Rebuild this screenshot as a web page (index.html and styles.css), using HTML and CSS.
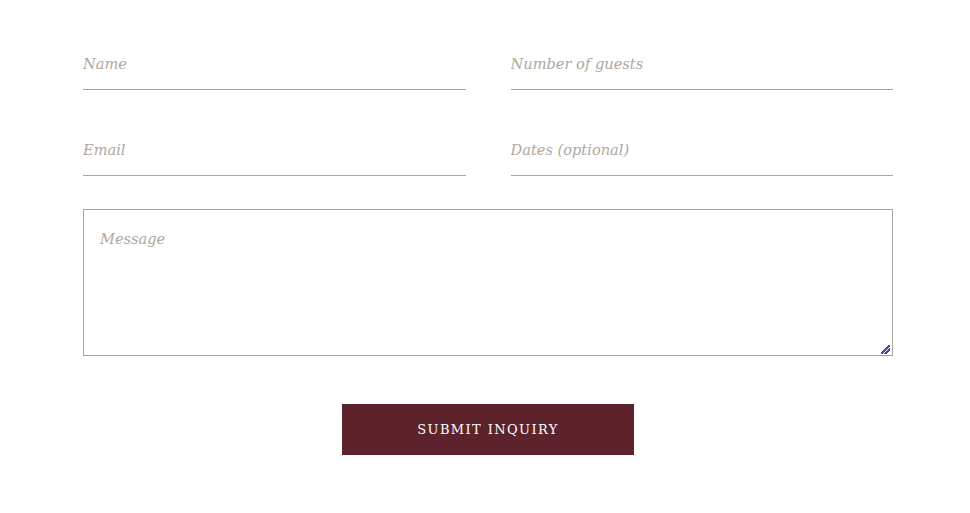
FILE: index.html
```html
<!DOCTYPE html>
<html lang="en">
  <head>
    <title>Inquiry</title>
    <link rel="stylesheet" href="styles.css">
  </head>
  <body>
    <form class="inquiry">
      <div class="row">
        <input type="text" class="field" placeholder="Name">
        <input type="text" class="field" placeholder="Number of guests">
      </div>
      <div class="row">
        <input type="email" class="field" placeholder="Email">
        <input type="text" class="field" placeholder="Dates (optional)">
      </div>
      <textarea class="message" placeholder="Message"></textarea>
      <div class="actions">
        <button type="button" class="submit">Submit Inquiry</button>
      </div>
    </form>
  </body>
</html>
```

FILE: styles.css
```css
body {
  margin: 0;
  background: #fff;
  font-family: "DejaVu Serif", Georgia, serif;
}
.inquiry {
  width: 810px;
  margin: 0 0 0 83px;
  padding-top: 43px;
}
.row {
  display: grid;
  grid-template-columns: 1fr 1fr;
  column-gap: 45px;
  margin-bottom: 39px;
}
.field {
  border: none;
  border-bottom: 1px solid #aaa49b;
  padding: 9px 0 13px;
  font-family: inherit;
  font-size: 14.6px;
  font-style: italic;
  line-height: 24px;
  color: #555;
  outline: none;
  min-width: 0;
}
.field::placeholder,
.message::placeholder {
  color: #b0a89d;
}
.message {
  display: block;
  box-sizing: border-box;
  width: 100%;
  height: 147px;
  margin-top: -6px;
  border: 1px solid #aaa49b;
  padding: 17px 16px;
  font-family: inherit;
  font-size: 14.6px;
  font-style: italic;
  line-height: 24px;
  outline: none;
}
/* small purple grip in the corner */
.message::-webkit-resizer {
  background-color: #fff;
  background-image: linear-gradient(135deg, transparent 43%, #5a3fa6 43% 57%, transparent 57% 65%, #5a3fa6 65% 79%, transparent 79%);
  background-size: 9px 9px;
  background-position: right 2px bottom 1px;
  background-repeat: no-repeat;
}
.actions {
  display: flex;
  justify-content: center;
  margin-top: 48px;
}
.submit {
  width: 292px;
  height: 51px;
  border: none;
  background: #5c232d;
  color: #fff;
  font-family: inherit;
  font-size: 13px;
  letter-spacing: 1.4px;
  text-transform: uppercase;
}
```
